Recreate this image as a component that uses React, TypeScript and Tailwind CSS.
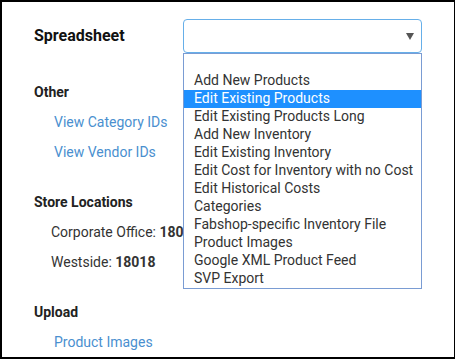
const OPTIONS = [
  '',
  'Add New Products',
  'Edit Existing Products',
  'Edit Existing Products Long',
  'Add New Inventory',
  'Edit Existing Inventory',
  'Edit Cost for Inventory with no Cost',
  'Edit Historical Costs',
  'Categories',
  'Fabshop-specific Inventory File',
  'Product Images',
  'Google XML Product Feed',
  'SVP Export',
];

const SELECTED = 2;

function Link({ children }: { children: React.ReactNode }) {
  return <div className="pl-[52px] mt-[10px] leading-[20px] text-[14px] text-[#4a8fcf]">{children}</div>;
}

function Heading({ children, className = '' }: { children: React.ReactNode; className?: string }) {
  return (
    <div className={`pl-[32px] leading-[20px] text-[14px] font-bold text-[#222] ${className}`}>{children}</div>
  );
}

export default function App() {
  return (
    <div
      className="relative w-[455px] h-[359px] bg-white border-l-2 border-t-2 border-b-2 border-r border-black overflow-hidden text-[#333]"
      style={{ fontFamily: 'Roboto, "Liberation Sans", sans-serif' }}
    >
      {/* Spreadsheet row */}
      <div className="flex items-center pt-[17px]">
        <div className="w-[181px] pl-[32px] text-[16px] font-bold text-[#111]">Spreadsheet</div>
        <div className="relative w-[239px] h-[34px] rounded-[4px] border border-[#66afe9] bg-white">
          <svg className="absolute right-[7px] top-[13px]" width="8" height="7" viewBox="0 0 8 7">
            <path d="M0 0 L8 0 L4 7 Z" fill="#555" />
          </svg>
        </div>
      </div>

      <Heading className="mt-[29px]">Other</Heading>
      <Link>View Category IDs</Link>
      <Link>View Vendor IDs</Link>

      <Heading className="mt-[30px]">Store Locations</Heading>
      <div className="pl-[49px] mt-[10px] leading-[20px] text-[14px]">
        Corporate Office: <span className="font-bold">180</span>
      </div>
      <div className="pl-[49px] mt-[10px] leading-[20px] text-[14px]">
        Westside: <span className="font-bold">18018</span>
      </div>

      <Heading className="mt-[30px]">Upload</Heading>
      <Link>Product Images</Link>

      {/* Open dropdown list */}
      <div className="absolute left-[181px] top-[51px] w-[239px] bg-white border border-[#7a9cd3]">
        {OPTIONS.map((opt, i) => (
          <div
            key={i}
            className={`h-[18px] leading-[17px] pl-[10px] text-[14px] whitespace-nowrap ${
              i === SELECTED ? 'bg-[#1e90ff] text-white' : 'text-[#333]'
            }`}
          >
            {opt}
          </div>
        ))}
      </div>
    </div>
  );
}
